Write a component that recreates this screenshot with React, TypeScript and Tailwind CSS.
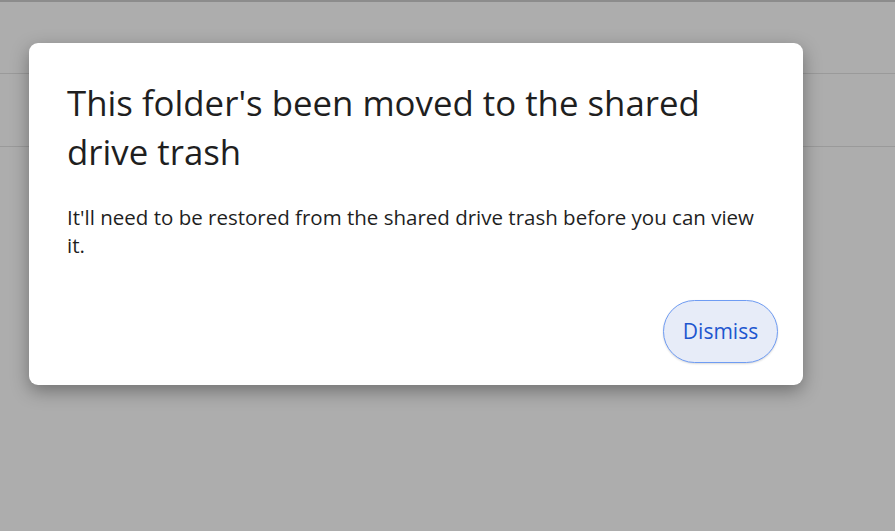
export default function App() {
  return (
    <div className="relative h-[531px] w-full overflow-hidden bg-[#adadad]" style={{ fontFamily: "'Open Sans', sans-serif" }}>
      <div className="h-[2px] bg-[#8c8c8c]" />
      <div className="h-[72px] border-b border-[#9a9a9a]" />
      <div className="h-[73px] border-b border-[#9a9a9a]" />

      <div className="absolute left-[29px] top-[43px] flex h-[342px] w-[774px] flex-col rounded-[9px] bg-white pl-[38px] pr-[25px] pt-[35px] pb-[22px] shadow-[0_6px_18px_rgba(0,0,0,0.35)]">
        <h1 className="pr-[60px] text-[34.8px] leading-[49px] text-[#1f1f1f]">
          This folder's been moved to the shared drive trash
        </h1>
        <p className="mt-[27px] pr-[20px] text-[20.5px] leading-[28px] text-[#1f1f1f]">
          It'll need to be restored from the shared drive trash before you can view it.
        </p>
        <div className="mt-auto flex justify-end">
          <button className="h-[63px] w-[115px] rounded-full border-[1.5px] border-[#6f9cf3] bg-[#e7ecf8] text-[21px] font-medium text-[#1d56cf] shadow-[0_1px_2px_rgba(0,0,0,0.15)]">
            Dismiss
          </button>
        </div>
      </div>
    </div>
  );
}
